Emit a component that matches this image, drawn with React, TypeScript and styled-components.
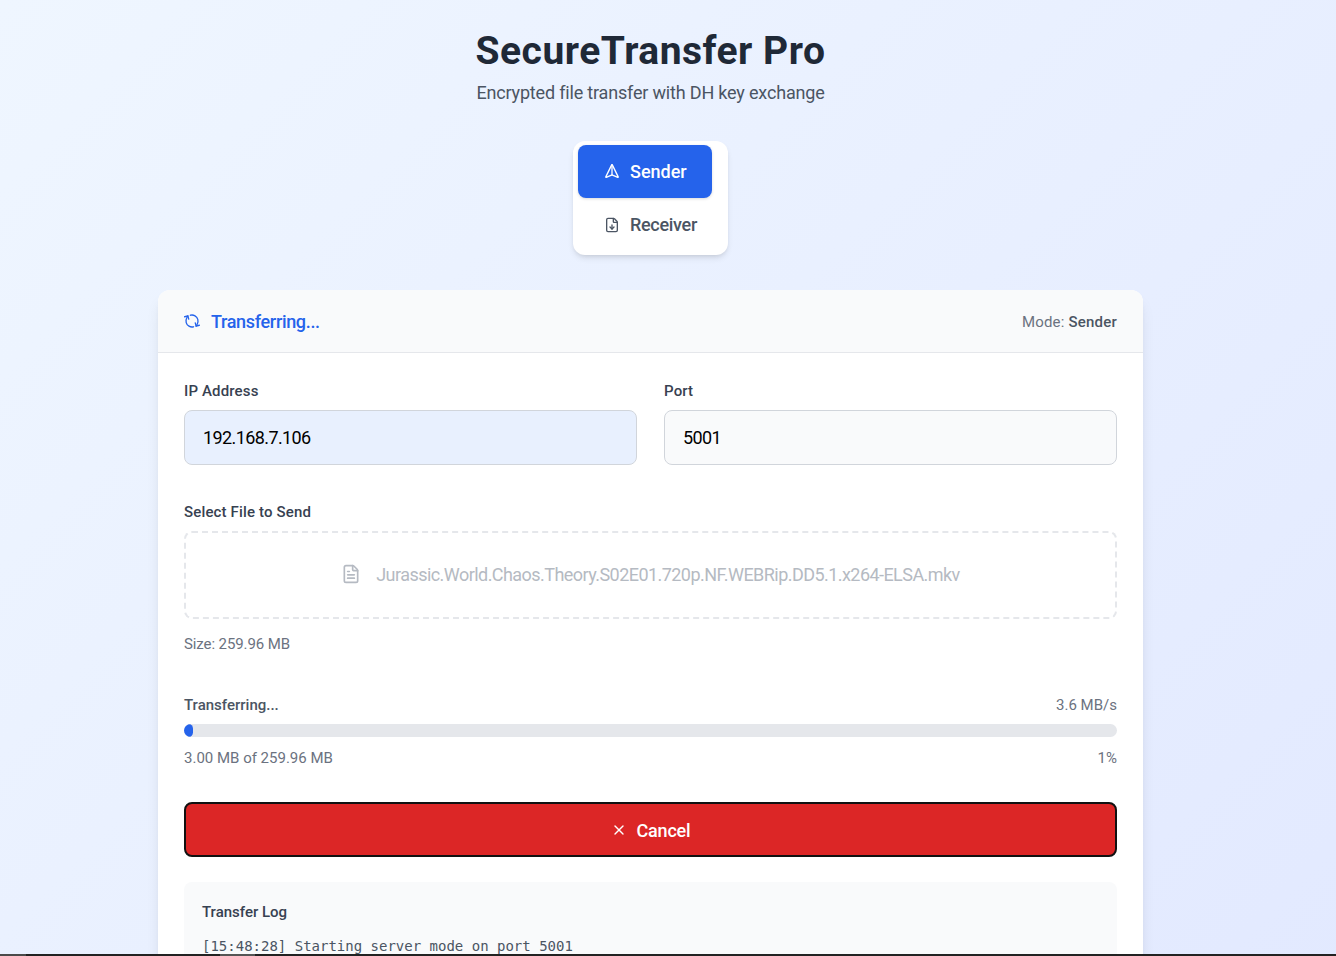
import styled, { createGlobalStyle } from "styled-components";
import { FileDown, FileText, RefreshCw, Send, X } from "lucide-react";

const GlobalStyle = createGlobalStyle`
  html {
    height: 956px;
    overflow: hidden;
  }
  * {
    box-sizing: border-box;
  }
  body {
    margin: 0;
    font-family: Roboto, "Noto Sans", sans-serif;
    background: linear-gradient(to bottom right, #eff6ff 0%, #e0e7ff 100%) no-repeat;
    background-size: 100% 1400px;
  }
`;

export default function App() {
  return (
    <>
      <GlobalStyle />
      <Page>
        <Title>SecureTransfer Pro</Title>
        <Subtitle>Encrypted file transfer with DH key exchange</Subtitle>
        <ModeSwitch>
          <ModeButton $active>
            <SenderIcon size={16} />
            Sender
          </ModeButton>
          <ModeButton>
            <FileDown size={16} />
            Receiver
          </ModeButton>
        </ModeSwitch>
        <Card>
          <CardHeader>
            <Status>
              <StatusIcon size={16} />
              Transferring...
            </Status>
            <ModeLabel>
              Mode: <strong>Sender</strong>
            </ModeLabel>
          </CardHeader>
          <CardBody>
            <FieldGrid>
              <div>
                <Label>IP Address</Label>
                <TextInput $autofill value="192.168.7.106" readOnly />
              </div>
              <div>
                <Label>Port</Label>
                <TextInput value="5001" readOnly />
              </div>
            </FieldGrid>
            <FileSection>
              <Label>Select File to Send</Label>
              <DropZone>
                <FileText size={20} />
                Jurassic.World.Chaos.Theory.S02E01.720p.NF.WEBRip.DD5.1.x264-ELSA.mkv
              </DropZone>
              <FileSize>Size: 259.96 MB</FileSize>
            </FileSection>
            <Progress>
              <ProgressRow>
                <ProgressTitle>Transferring...</ProgressTitle>
                <span>3.6 MB/s</span>
              </ProgressRow>
              <Track>
                <Fill style={{ width: "1%" }} />
              </Track>
              <ProgressRow>
                <span>3.00 MB of 259.96 MB</span>
                <span>1%</span>
              </ProgressRow>
            </Progress>
            <CancelButton>
              <X size={16} />
              <span>Cancel</span>
            </CancelButton>
            <LogPanel>
              <LogTitle>Transfer Log</LogTitle>
              <LogLine>[15:48:28] Starting server mode on port 5001</LogLine>
            </LogPanel>
          </CardBody>
        </Card>
      </Page>
      <BottomEdge />
    </>
  );
}

const Page = styled.div`
  width: 1301px;
  height: 956px;
  overflow: hidden;
  display: flex;
  flex-direction: column;
  align-items: center;
  padding-top: 25px;
`;

const Title = styled.h1`
  margin: 0;
  font-size: 39px;
  line-height: 52px;
  font-weight: 700;
  letter-spacing: 0.5px;
  color: #1f2937;
`;

const Subtitle = styled.p`
  margin: 3px 0 0;
  font-size: 18px;
  line-height: 26px;
  letter-spacing: -0.18px;
  color: #4b5563;
`;

const ModeSwitch = styled.div`
  flex-shrink: 0;
  margin-top: 35px;
  width: 155px;
  padding: 4px 16px 4px 5px;
  display: flex;
  flex-direction: column;
  background: #fff;
  border-radius: 12px;
  box-shadow: 0 4px 6px -1px rgba(0, 0, 0, 0.1), 0 2px 4px -2px rgba(0, 0, 0, 0.1);
`;

const ModeButton = styled.div<{ $active?: boolean }>`
  height: 53px;
  padding-left: 26px;
  display: flex;
  align-items: center;
  gap: 10px;
  border-radius: 8px;
  font-size: 18px;
  font-weight: 500;
  white-space: nowrap;
  letter-spacing: ${(p) => (p.$active ? "0" : "-0.3px")};
  color: ${(p) => (p.$active ? "#fff" : "#4b5563")};
  background: ${(p) => (p.$active ? "#2563eb" : "transparent")};
  box-shadow: ${(p) => (p.$active ? "0 1px 3px rgba(0, 0, 0, 0.15)" : "none")};
`;

const SenderIcon = styled(Send)`
  transform: translateY(2px) rotate(-45deg);
`;

const Card = styled.div`
  flex-shrink: 0;
  margin-top: 35px;
  width: 985px;
  background: #fff;
  border-radius: 12px;
  overflow: hidden;
  box-shadow: 0 10px 15px -3px rgba(0, 0, 0, 0.1), 0 4px 6px -4px rgba(0, 0, 0, 0.1);
`;

const CardHeader = styled.div`
  height: 63px;
  padding: 0 26px;
  display: flex;
  align-items: center;
  justify-content: space-between;
  background: #f9fafb;
  border-bottom: 1px solid #e5e7eb;
`;

const Status = styled.div`
  display: flex;
  align-items: center;
  gap: 11px;
  font-size: 18px;
  font-weight: 500;
  letter-spacing: -0.33px;
  color: #2563eb;
`;

const StatusIcon = styled(RefreshCw)`
  transform: rotate(75deg);
`;

const ModeLabel = styled.div`
  padding-top: 1px;
  font-size: 15px;
  letter-spacing: 0.2px;
  color: #6b7280;
  strong {
    font-weight: 500;
    color: #4b5563;
  }
`;

const CardBody = styled.div`
  padding: 26px 26px 0;
`;

const FieldGrid = styled.div`
  display: grid;
  grid-template-columns: 1fr 1fr;
  gap: 27px;
`;

const Label = styled.div`
  padding-top: 1px;
  margin-bottom: 7px;
  font-size: 15px;
  line-height: 23px;
  font-weight: 500;
  letter-spacing: 0.15px;
  color: #374151;
`;

const TextInput = styled.input<{ $autofill?: boolean }>`
  display: block;
  width: 100%;
  height: 55px;
  padding: 0 18px;
  font: inherit;
  font-size: 18px;
  letter-spacing: -0.6px;
  color: #000;
  background: ${(p) => (p.$autofill ? "#e8f0fe" : "#f9fafb")};
  border: 1px solid #d1d5db;
  border-radius: 8px;
  outline: none;
`;

const FileSection = styled.div`
  margin-top: 35px;
`;

const DropZone = styled.div`
  height: 88px;
  padding-bottom: 2px;
  display: flex;
  align-items: center;
  justify-content: center;
  gap: 15px;
  font-size: 18px;
  letter-spacing: -0.55px;
  color: #b5bac2;
  border: 2px dashed #e5e7eb;
  border-radius: 8px;
`;

const FileSize = styled.div`
  margin-top: 14px;
  font-size: 15px;
  line-height: 23px;
  letter-spacing: -0.1px;
  color: #6b7280;
`;

const Progress = styled.div`
  margin-top: 38px;
`;

const ProgressRow = styled.div`
  display: flex;
  justify-content: space-between;
  font-size: 15px;
  line-height: 23px;
  color: #6b7280;
`;

const ProgressTitle = styled.span`
  font-weight: 500;
  color: #4b5563;
`;

const Track = styled.div`
  height: 13px;
  margin: 7px 0 10px;
  background: #e5e7eb;
  border-radius: 7px;
  overflow: hidden;
`;

const Fill = styled.div`
  height: 100%;
  background: #2563eb;
  border-radius: 7px;
`;

const CancelButton = styled.div`
  margin-top: 32px;
  height: 55px;
  display: flex;
  align-items: center;
  justify-content: center;
  gap: 10px;
  font-size: 18px;
  font-weight: 500;
  letter-spacing: -0.2px;
  color: #fff;
  background: #dc2626;
  border: 2px solid #111;
  border-radius: 8px;
  span {
    padding-top: 2px;
  }
`;

const LogPanel = styled.div`
  margin-top: 25px;
  padding: 19px 18px 18px;
  height: 200px;
  background: #f9fafb;
  border-radius: 8px;
`;

const LogTitle = styled.div`
  font-size: 15px;
  line-height: 23px;
  font-weight: 500;
  color: #374151;
`;

const LogLine = styled.div`
  margin-top: 12px;
  font-family: "DejaVu Sans Mono", monospace;
  font-size: 14px;
  line-height: 20px;
  color: #4b5563;
`;

const BottomEdge = styled.div`
  position: fixed;
  left: 0;
  right: 0;
  bottom: 0;
  height: 2px;
  background: linear-gradient(
    to right,
    #4a4a4a 26px,
    #222 26px,
    #222 220px,
    #555 220px,
    #555 255px,
    #222 255px
  );
`;
